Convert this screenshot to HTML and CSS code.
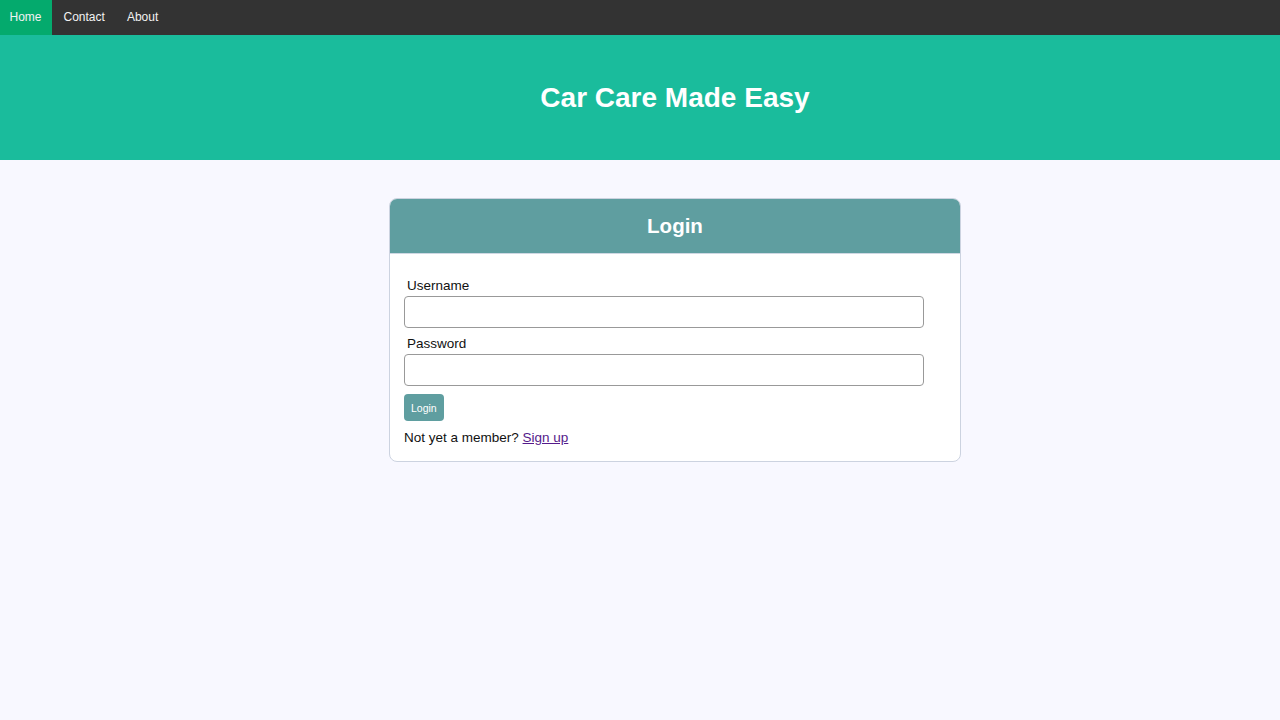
FILE: index.html
```html
<!DOCTYPE html>
<html lang="en">
<head>
<meta charset="utf-8">
<title>Car Care Made Easy</title>
<link rel="stylesheet" href="styles.css">
</head>
<body>
<nav class="topnav">
  <a class="nav-link active" href="#">Home</a>
  <a class="nav-link" href="#">Contact</a>
  <a class="nav-link" href="#">About</a>
</nav>
<header class="hero">
  <h1 class="hero-title">Car Care Made Easy</h1>
</header>
<main class="main">
  <section class="login-box">
    <div class="login-head">Login</div>
    <form class="login-body">
      <label class="field-label" for="username">Username</label>
      <input class="field-input" id="username" type="text">
      <label class="field-label second" for="password">Password</label>
      <input class="field-input" id="password" type="password">
      <button class="login-btn" type="button">Login</button>
      <p class="signup">Not yet a member? <a class="signup-link" href="#">Sign up</a></p>
    </form>
  </section>
</main>
</body>
</html>
```
FILE: styles.css
```css
* { box-sizing: border-box; }
body {
  margin: 0;
  background: #f8f8ff;
  font-family: "Liberation Sans", Arial, sans-serif;
  color: #111;
}
.topnav {
  display: flex;
  gap: 2px;
  height: 35px;
  background: #333;
}
.nav-link {
  display: block;
  padding: 0 10.5px 0 9.5px;
  line-height: 35px;
  font-size: 12px;
  color: #f2f2f2;
  text-decoration: none;
}
.nav-link.active { background: #04aa6d; }
.hero {
  display: flex;
  align-items: center;
  justify-content: center;
  height: 125px;
  padding-left: 70px;
  background: #1abc9c;
}
.hero-title {
  margin: 0;
  font-size: 28px;
  font-weight: bold;
  color: #fff;
}
.main {
  padding: 38px 0 0 70px;
}
.login-box {
  width: 572px;
  margin: 0 auto;
  background: #fff;
  border: 1px solid #ccd3e0;
  border-radius: 8px;
  overflow: hidden;
}
.login-head {
  height: 55px;
  background: #5f9ea0;
  color: #fff;
  font-size: 20.5px;
  font-weight: bold;
  display: flex;
  align-items: center;
  justify-content: center;
  border-bottom: 1px solid #cfd8e3;
}
.login-body {
  padding: 23px 14px 14px;
  display: flex;
  flex-direction: column;
  align-items: flex-start;
}
.field-label {
  display: block;
  padding-left: 3px;
  line-height: 18px;
  font-size: 13.5px;
  margin-bottom: 1px;
}
.field-label.second { margin-top: 7px; }
.field-input {
  width: 520px;
  height: 32px;
  border: 1px solid #999;
  border-radius: 4px;
  background: #fff;
}
.login-btn {
  margin-top: 8px;
  height: 27px;
  padding: 0 7px;
  border: none;
  border-radius: 4px;
  background: #5f9ea0;
  color: #fff;
  font-family: "Liberation Sans", Arial, sans-serif;
  font-size: 10.5px;
}
.signup {
  margin: 8px 0 0;
  line-height: 18px;
  font-size: 13.5px;
}
.signup-link { color: #551a8b; }
```
